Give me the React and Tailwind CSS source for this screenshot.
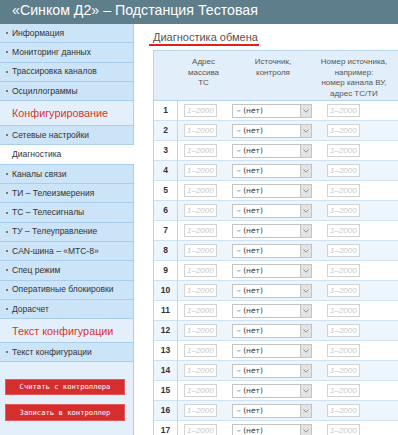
const menuTop = ['Информация', 'Мониторинг данных', 'Трассировка каналов', 'Осциллограммы'];
const menuConfig = [
  'Сетевые настройки',
  'Диагностика',
  'Каналы связи',
  'ТИ – Телеизмерения',
  'ТС – Телесигналы',
  'ТУ – Телеуправление',
  'CAN-шина – «МТС-8»',
  'Спец режим',
  'Оперативные блокировки',
  'Дорасчет',
];

function MenuItem({ label, active }) {
  if (active) {
    return (
      <div className="h-[19.3px] flex items-center pl-[12px] bg-white border-b border-[#a9cdec] text-[8.5px] text-[#333]">
        {label}
      </div>
    );
  }
  return (
    <div className="h-[19.3px] flex items-center pl-[6px] bg-[#cce4f8] border-b border-r border-[#a9cdec] text-[8.5px] text-[#333]">
      <span className="w-[2px] h-[2px] rounded-full bg-[#555] mr-[4px]" />
      {label}
    </div>
  );
}

function Section({ title, className }) {
  return (
    <div className={`flex items-center pl-[12px] bg-[#e3f0fc] border-b border-r border-[#a9cdec] text-[10.8px] text-[#d8332f] ${className}`}>
      {title}
    </div>
  );
}

function NumInput() {
  return (
    <div className="w-[33px] h-[13px] border border-[#d2d2d2] bg-white overflow-hidden whitespace-nowrap pl-[2px] text-[8px] leading-[11px] italic text-[#c9c9c9]">
      1–2000
    </div>
  );
}

function Select() {
  return (
    <div className="w-[80px] h-[14px] border border-[#c4c4c4] bg-white flex">
      <div className="flex-1 pl-[4px] text-[7.5px] leading-[12px] text-[#333] font-['DejaVu_Sans',sans-serif]">– (нет)</div>
      <div className="w-[11px] bg-[#e3e3e3] border-l border-[#c4c4c4] flex items-center justify-center">
        <svg width="6" height="4" viewBox="0 0 6 4">
          <polyline points="0.5,0.5 3,3.2 5.5,0.5" fill="none" stroke="#888" strokeWidth="0.9" />
        </svg>
      </div>
    </div>
  );
}

export default function App() {
  const rows = Array.from({ length: 17 }, (_, i) => i + 1);

  return (
    <div className="w-[398px] h-[435px] overflow-hidden bg-white font-['Liberation_Sans',Arial,sans-serif]">
      <header className="h-[24px] bg-[#5e7e8b] text-white text-[14.2px] leading-[21px] pl-[12px] whitespace-nowrap">
        «Синком Д2» – Подстанция Тестовая
      </header>

      <div className="flex h-[411px]">
        <aside className="w-[134px] shrink-0 flex flex-col">
          {menuTop.map((m) => (
            <MenuItem key={m} label={m} />
          ))}
          <Section title="Конфигурирование" className="h-[25px]" />
          {menuConfig.map((m) => (
            <MenuItem key={m} label={m} active={m === 'Диагностика'} />
          ))}
          <Section title="Текст конфигурации" className="h-[24px]" />
          <MenuItem label="Текст конфигурации" />
          <div className="flex-1 bg-[#e3f0fc] border-r border-[#a9cdec] pt-[17px] px-[5px] flex flex-col gap-[9px]">
            <button className="w-[120px] h-[16px] bg-[#d62e2e] border border-[#e25a5a] text-white text-[7.2px] font-['DejaVu_Sans_Mono',monospace]">
              Считать с контроллера
            </button>
            <button className="w-[120px] h-[17px] bg-[#d62e2e] border border-[#e25a5a] text-white text-[7.2px] font-['DejaVu_Sans_Mono',monospace]">
              Записать в контроллер
            </button>
          </div>
        </aside>

        <main className="flex-1 min-w-0 overflow-hidden pl-[15px]">
          <div className="inline-block pl-[4px] pr-[1px] border-b-2 border-[#e0201c] text-[11px] leading-[13px] text-[#555]">
            Диагностика обмена
          </div>

          <div className="ml-[4px] mt-[2px] w-[300px] border-l border-t border-[#b6d5ee]">
            <div className="flex h-[50px] bg-[#e2effa] border-b border-[#b6d5ee] text-center text-[8px] leading-[10.5px] text-[#555]">
              <div className="w-[24px]" />
              <div className="w-[51px] pt-[6px]">
                Адрес
                <br />
                массива
                <br />
                ТС
              </div>
              <div className="w-[88px] pt-[6px]">
                Источник,
                <br />
                контроля
              </div>
              <div className="w-[74px] pt-[6px]">
                Номер источника,
                <br />
                например:
                <br />
                номер канала ВУ,
                <br />
                адрес ТС/ТИ
              </div>
            </div>

            {rows.map((n) => (
              <div
                key={n}
                className={`flex h-[20px] items-center border-b border-[#cfe2f3] ${n % 2 === 0 ? 'bg-[#eef6fd]' : 'bg-white'}`}
              >
                <div className="w-[24px] h-full border-r border-[#b6d5ee] flex items-center justify-center text-[8.5px] font-bold text-[#333]">
                  {n}
                </div>
                <div className="w-[51px] pl-[6px]">
                  <NumInput />
                </div>
                <div className="w-[88px] pl-[3px]">
                  <Select />
                </div>
                <div className="w-[74px] pl-[10px]">
                  <NumInput />
                </div>
              </div>
            ))}
          </div>
        </main>
      </div>
    </div>
  );
}
